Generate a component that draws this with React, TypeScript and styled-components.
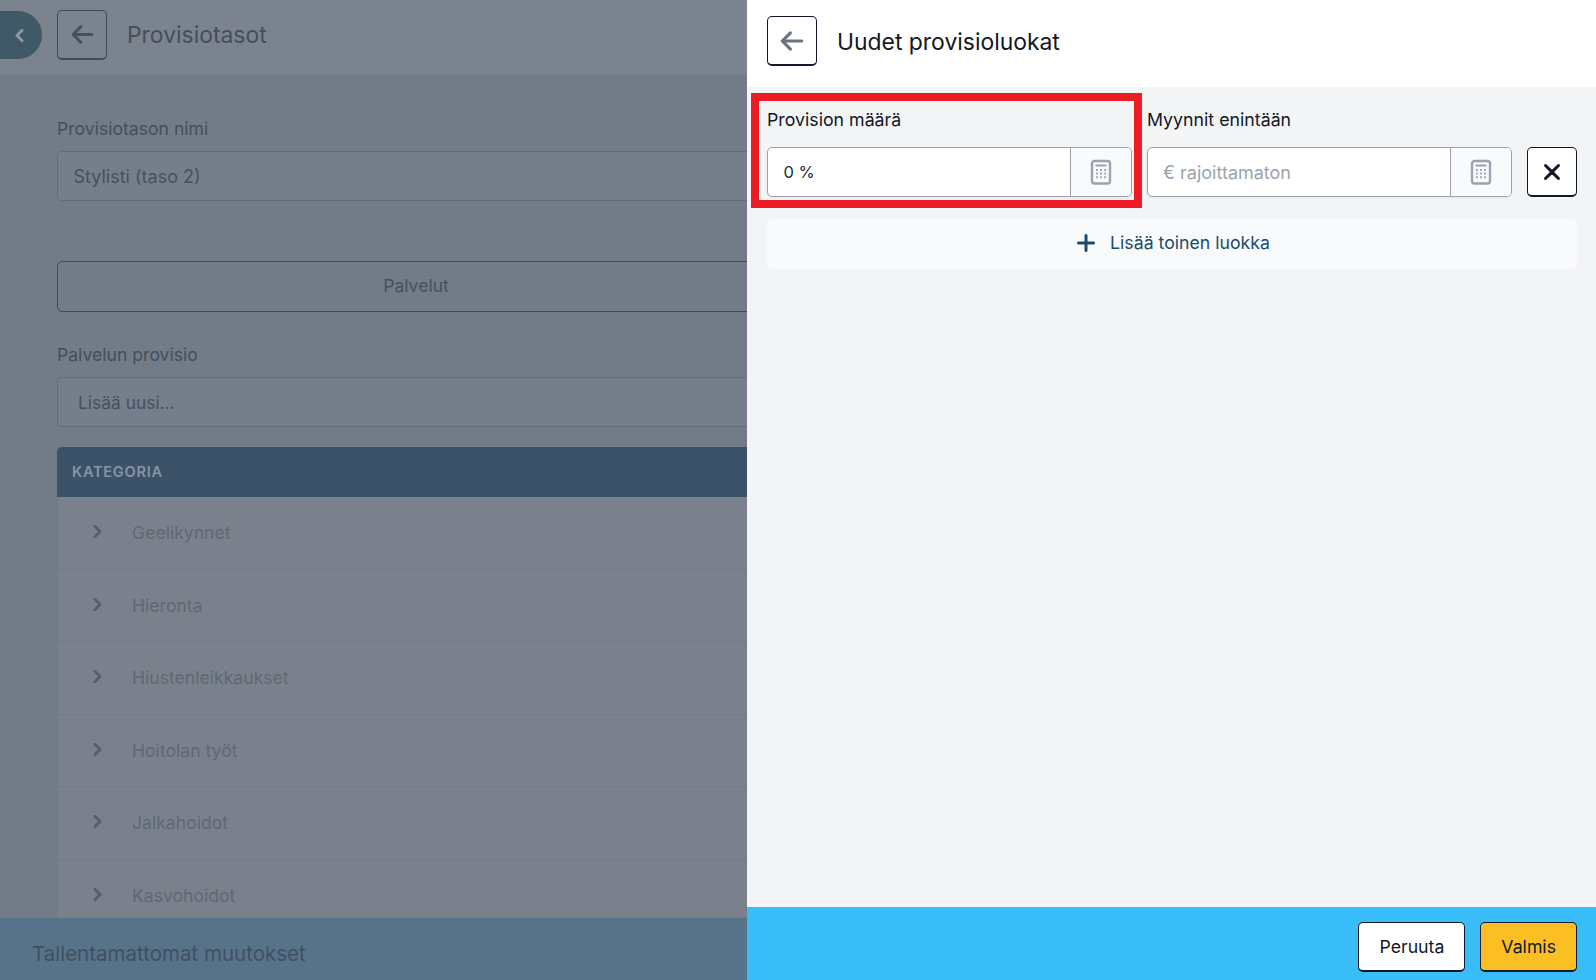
import React from 'react';
import styled, { createGlobalStyle } from 'styled-components';
import { HiArrowLeft, HiXMark, HiPlus, HiChevronRight, HiChevronLeft } from 'react-icons/hi2';

const Global = createGlobalStyle`
  html, body { margin: 0; padding: 0; height: 100%; overflow: hidden; }
  body { font-family: Inter, "Liberation Sans", sans-serif; }
  * { box-sizing: border-box; }
`;

const Screen = styled.div`
  display: flex;
  width: 1596px;
  height: 980px;
  overflow: hidden;
`;

const Page = styled.div`
  position: relative;
  flex: 0 0 747px;
  height: 980px;
  overflow: hidden;
  display: flex;
  flex-direction: column;
  background: #727c88;
`;

const PageHeader = styled.header`
  flex: 0 0 76px;
  display: flex;
  align-items: center;
  background: #7b838e;
  border-bottom: 1px solid #6f7c8a;
  padding-bottom: 5px;
`;

const Pill = styled.div`
  width: 42px;
  height: 48px;
  margin-right: 15px;
  border-radius: 0 24px 24px 0;
  background: #3f5966;
  color: #8c99a4;
  display: flex;
  align-items: center;
  justify-content: center;
  font-size: 17px;
  padding-right: 4px;
`;

const DimIconButton = styled.div`
  width: 50px;
  height: 50px;
  border: 1px solid #3f4a5a;
  border-bottom-width: 2px;
  border-radius: 5px;
  display: flex;
  align-items: center;
  justify-content: center;
  color: #47505f;
  font-size: 25px;
`;

const PageTitle = styled.h1`
  margin: 0 0 0 20px;
  font-size: 22.9px;
  font-weight: 400;
  color: #454e5d;
`;

const PageBody = styled.div`
  width: 718px;
  margin-left: 57px;
  display: flex;
  flex-direction: column;
`;

const DimLabel = styled.div`
  font-size: 17.6px;
  line-height: 20px;
  color: #454e5d;
`;

const NameLabel = styled(DimLabel)`
  margin-top: 43px;
  margin-bottom: 12px;
`;

const DimInput = styled.div`
  height: 50px;
  border: 1px solid #626d7a;
  border-radius: 5px;
  padding: 0 15.5px;
  display: flex;
  align-items: center;
  font-size: 18px;
  color: #475060;
  background: #757f8b;
`;

const SearchInput = styled(DimInput)`
  height: 50px;
  padding: 0 20px;
  font-size: 17.4px;
`;

const DimButton = styled.div`
  height: 51px;
  margin-top: 60px;
  padding-bottom: 2px;
  border: 1px solid #3f4a5a;
  border-radius: 5px;
  display: flex;
  align-items: center;
  justify-content: center;
  font-size: 17.6px;
  color: #475060;
`;

const ServiceLabel = styled(DimLabel)`
  margin-top: 33px;
  margin-bottom: 12px;
`;

const TableHead = styled.div`
  height: 50px;
  flex-shrink: 0;
  margin-top: 20px;
  padding-bottom: 1px;
  border-radius: 5px 5px 0 0;
  background: #3b5268;
  display: flex;
  align-items: center;
  padding-left: 15px;
  font-size: 14.6px;
  font-weight: 600;
  letter-spacing: 0.7px;
  color: #8794a3;
`;

const Row = styled.div`
  height: 72.5px;
  flex-shrink: 0;
  display: flex;
  align-items: center;
  background: #7a818c;
  border-bottom: 1px solid #727a86;
  border-left: 1px solid #727a86;
  color: #5f6875;
  font-size: 17.6px;
`;

const Chevron = styled.span`
  display: flex;
  width: 74px;
  padding-left: 31px;
  font-size: 17px;
  color: #555f6d;
  margin-top: -2px;
`;

const SaveBar = styled.div`
  position: absolute;
  left: 0;
  right: 0;
  bottom: 0;
  height: 62px;
  background: #567389;
  display: flex;
  align-items: center;
  padding-left: 32px;
  padding-top: 8px;
  font-size: 20.5px;
  color: #434f61;
`;

const Drawer = styled.aside`
  flex: 1;
  height: 980px;
  display: flex;
  flex-direction: column;
  background: #f3f4f6;
`;

const DrawerHeader = styled.header`
  flex: 0 0 87px;
  display: flex;
  align-items: center;
  gap: 20px;
  padding: 0 19px 5px 20px;
  background: #fff;
`;

const IconButton = styled.button`
  flex: 0 0 50px;
  width: 50px;
  height: 50px;
  padding: 0;
  background: #fff;
  border: 1px solid #111827;
  border-bottom-width: 2px;
  border-radius: 5px;
  display: flex;
  align-items: center;
  justify-content: center;
  font-size: 26px;
  color: ${p => p.color || '#111827'};
`;

const DrawerTitle = styled.h2`
  margin: 2px 0 0;
  font-size: 22.9px;
  font-weight: 400;
  color: #111827;
`;

const DrawerBody = styled.div`
  flex: 1;
  padding: 20px 19px 20px 20px;
  display: flex;
  flex-direction: column;
  gap: 22px;
`;

const FieldRow = styled.div`
  display: flex;
  align-items: flex-end;
  gap: 15px;
`;

const Field = styled.div`
  position: relative;
  flex: 1;
  display: flex;
  flex-direction: column;
  gap: 15px;
`;

const Highlighted = styled(Field)`
  &::after {
    content: '';
    position: absolute;
    left: -16px;
    right: -10px;
    top: -14px;
    bottom: -11px;
    border: 8px solid #ed1c24;
    pointer-events: none;
  }
`;

const Label = styled.label`
  margin-top: 1px;
  font-size: 17.75px;
  line-height: 24px;
  color: #111827;
`;

const InputGroup = styled.div`
  height: 50px;
  display: flex;
  background: #fff;
  border: 1px solid #9ca3af;
  border-radius: 5px;
  overflow: hidden;
  box-shadow: 0 1px 2px rgba(0, 0, 0, 0.05);
`;

const InputValue = styled.div<{ $placeholder?: boolean }>`
  flex: 1;
  display: flex;
  align-items: center;
  padding-left: ${p => (p.$placeholder ? '15px' : '15.5px')};
  font-size: ${p => (p.$placeholder ? '18px' : '16.5px')};
  color: ${p => (p.$placeholder ? '#9ca3af' : '#1f2937')};
`;

const Addon = styled.div`
  flex: 0 0 61px;
  display: flex;
  align-items: center;
  justify-content: center;
  background: #f9fafb;
  border-left: 1px solid #9ca3af;
  color: #9ca3af;
`;

const AddRow = styled.div`
  height: 50px;
  padding-bottom: 3px;
  display: flex;
  align-items: center;
  justify-content: center;
  gap: 12px;
  background: #f9fafb;
  border-radius: 5px;
  font-size: 17.7px;
  color: #1d4a6b;
`;

const AddIcon = styled.span`
  display: flex;
  font-size: 24px;
`;

const DrawerFooter = styled.footer`
  flex: 0 0 73px;
  display: flex;
  align-items: center;
  justify-content: flex-end;
  gap: 15px;
  padding: 0 19px;
  background: #38bdf8;
`;

const FooterButton = styled.button<{ $primary?: boolean }>`
  height: 50px;
  margin-top: 6px;
  padding: 0 20px;
  background: ${p => (p.$primary ? '#fbbf24' : '#fff')};
  border: 1px solid #111827;
  border-bottom-width: 2px;
  border-radius: 5px;
  font-family: inherit;
  font-size: 17.7px;
  color: #111827;
`;

const Calculator = () => (
  <svg width="24" height="26" viewBox="0 0 24 26" fill="none" stroke="currentColor">
    <rect x="3" y="2" width="18" height="22.5" rx="2.5" strokeWidth="2.4" />
    <path d="M6.5 6.5h11" strokeWidth="2" />
    <path
      d="M7 11h1.8M11.1 11h1.8M15.2 11h1.8M7 14.6h1.8M11.1 14.6h1.8M15.2 14.6h1.8M7 18.2h1.8M11.1 18.2h1.8M15.2 18.2h1.8"
      strokeWidth="2"
    />
  </svg>
);

const rows = ['Geelikynnet', 'Hieronta', 'Hiustenleikkaukset', 'Hoitolan työt', 'Jalkahoidot', 'Kasvohoidot'];

export default function App() {
  return (
    <Screen>
      <Global />
      <Page>
        <PageHeader>
          <Pill><HiChevronLeft strokeWidth={2.6} /></Pill>
          <DimIconButton><HiArrowLeft strokeWidth={1.4} /></DimIconButton>
          <PageTitle>Provisiotasot</PageTitle>
        </PageHeader>
        <PageBody>
          <NameLabel>Provisiotason nimi</NameLabel>
          <DimInput>Stylisti (taso 2)</DimInput>
          <DimButton>Palvelut</DimButton>
          <ServiceLabel>Palvelun provisio</ServiceLabel>
          <SearchInput>Lisää uusi...</SearchInput>
          <TableHead>KATEGORIA</TableHead>
          {rows.map(r => (
            <Row key={r}>
              <Chevron><HiChevronRight strokeWidth={2.6} /></Chevron>
              {r}
            </Row>
          ))}
        </PageBody>
        <SaveBar>Tallentamattomat muutokset</SaveBar>
      </Page>
      <Drawer>
        <DrawerHeader>
          <IconButton color="#6b7280"><HiArrowLeft strokeWidth={1.4} /></IconButton>
          <DrawerTitle>Uudet provisioluokat</DrawerTitle>
        </DrawerHeader>
        <DrawerBody>
          <FieldRow>
            <Highlighted>
              <Label>Provision määrä</Label>
              <InputGroup>
                <InputValue>0 %</InputValue>
                <Addon><Calculator /></Addon>
              </InputGroup>
            </Highlighted>
            <Field>
              <Label>Myynnit enintään</Label>
              <InputGroup>
                <InputValue $placeholder>€ rajoittamaton</InputValue>
                <Addon><Calculator /></Addon>
              </InputGroup>
            </Field>
            <IconButton><HiXMark strokeWidth={1.3} /></IconButton>
          </FieldRow>
          <AddRow>
            <AddIcon><HiPlus strokeWidth={1.5} /></AddIcon>
            Lisää toinen luokka
          </AddRow>
        </DrawerBody>
        <DrawerFooter>
          <FooterButton>Peruuta</FooterButton>
          <FooterButton $primary>Valmis</FooterButton>
        </DrawerFooter>
      </Drawer>
    </Screen>
  );
}
